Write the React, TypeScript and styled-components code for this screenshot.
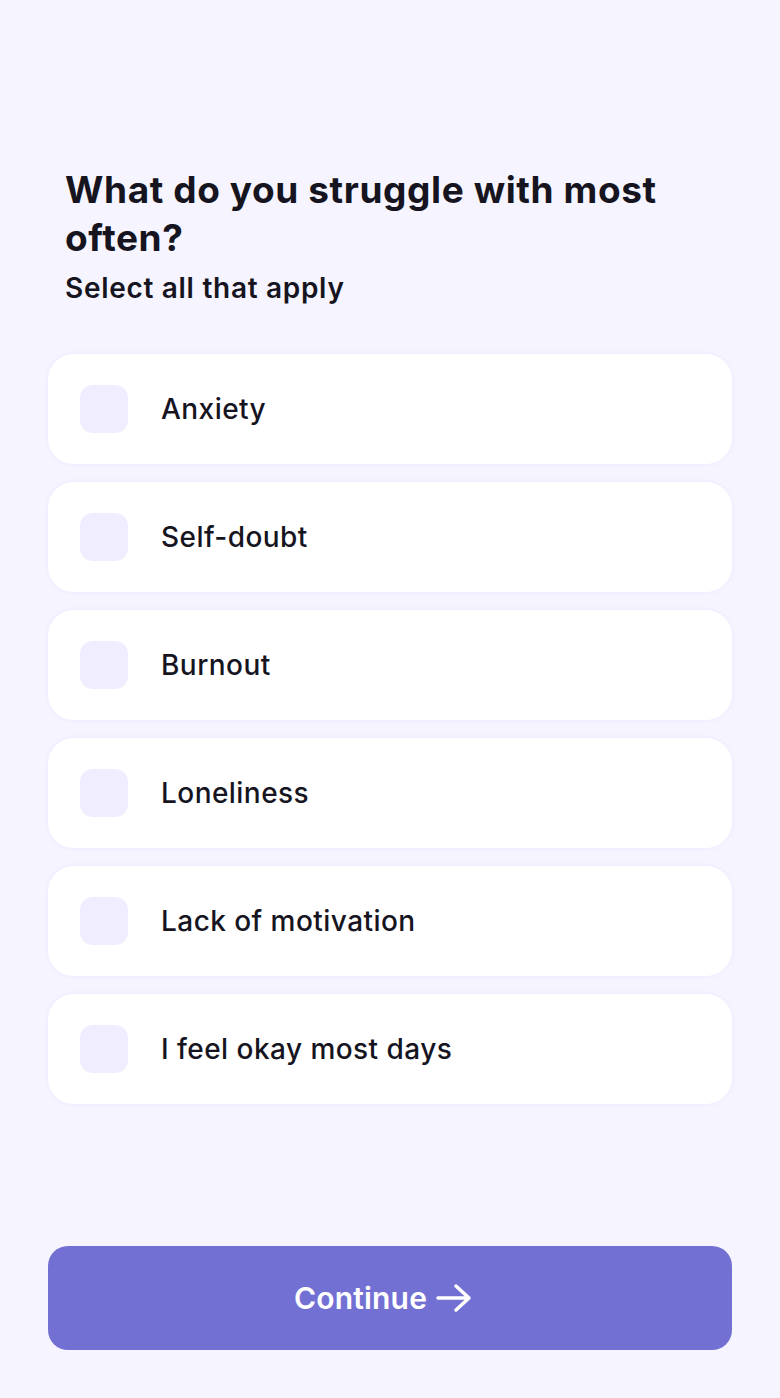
import React, { useState } from "react";
import styled, { createGlobalStyle } from "styled-components";

const Global = createGlobalStyle`
  html, body { margin: 0; padding: 0; background: #f6f5ff; }
  body { font-family: Inter, "Noto Sans", sans-serif; color: #16151f; }
`;

const Page = styled.div`
  min-height: 1398px;
  box-sizing: border-box;
  padding: 166px 48px 48px;
  display: flex;
  flex-direction: column;
`;

const Header = styled.div`
  padding: 0 17px;
  margin-bottom: 48px;
`;

const Title = styled.h1`
  margin: 0;
  font-size: 37px;
  line-height: 48px;
  font-weight: 700;
  letter-spacing: 0.6px;
`;

const Subtitle = styled.p`
  margin: 8px 0 0;
  font-size: 28px;
  line-height: 36px;
  font-weight: 600;
  letter-spacing: 0.7px;
`;

const List = styled.div`
  display: flex;
  flex-direction: column;
  gap: 18px;
`;

const Option = styled.label<{ $on: boolean }>`
  height: 110px;
  display: flex;
  align-items: center;
  gap: 33px;
  padding: 0 32px;
  background: #fff;
  border-radius: 26px;
  box-shadow: 0 0 6px rgba(230, 226, 255, 0.6);
  cursor: pointer;
  outline: ${(p) => (p.$on ? "2px solid #7370d4" : "none")};
`;

const Box = styled.span<{ $on: boolean }>`
  width: 48px;
  height: 48px;
  border-radius: 13px;
  background: ${(p) => (p.$on ? "#7370d4" : "#efedff")};
  flex: none;
`;

const Label = styled.span`
  font-size: 28px;
  font-weight: 500;
  letter-spacing: 0.45px;
`;

const Spacer = styled.div`
  flex: 1;
`;

const Button = styled.button`
  height: 104px;
  border: none;
  border-radius: 20px;
  background: #7370d4;
  color: #fff;
  font-family: Inter, "Noto Sans", sans-serif;
  font-size: 30px;
  font-weight: 600;
  letter-spacing: 0.2px;
  display: flex;
  align-items: center;
  justify-content: center;
  gap: 9px;
  padding: 0 14px 0 0;
  cursor: pointer;
`;

const options = [
  "Anxiety",
  "Self-doubt",
  "Burnout",
  "Loneliness",
  "Lack of motivation",
  "I feel okay most days",
];

export default function App() {
  const [picked, setPicked] = useState<string[]>([]);
  const toggle = (o: string) =>
    setPicked((p) => (p.includes(o) ? p.filter((x) => x !== o) : [...p, o]));

  return (
    <>
      <Global />
      <Page>
        <Header>
          <Title>What do you struggle with most often?</Title>
          <Subtitle>Select all that apply</Subtitle>
        </Header>
        <List>
          {options.map((o) => (
            <Option key={o} $on={picked.includes(o)} onClick={() => toggle(o)}>
              <Box $on={picked.includes(o)} />
              <Label>{o}</Label>
            </Option>
          ))}
        </List>
        <Spacer />
        <Button>
          Continue
          <svg width="36" height="30" viewBox="0 0 36 30" fill="none">
            <path d="M2 15h31M20 3l13 12-13 12" stroke="#fff" strokeWidth="3.5" strokeLinecap="round" strokeLinejoin="round" />
          </svg>
        </Button>
      </Page>
    </>
  );
}
